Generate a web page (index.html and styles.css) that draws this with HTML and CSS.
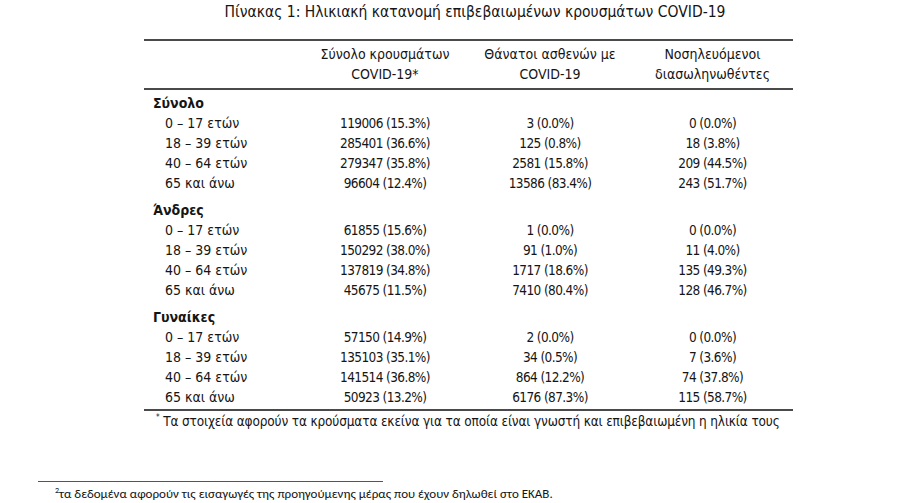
FILE: index.html
```html
<!DOCTYPE html>
<html lang="el">
<head>
<meta charset="utf-8">
<link rel="stylesheet" href="styles.css">
</head>
<body>
<div class="title">Πίνακας 1: Ηλικιακή κατανομή επιβεβαιωμένων κρουσμάτων COVID-19</div>
<div class="table">
  <div class="head">
    <div></div>
    <div class="c">Σύνολο κρουσμάτων<br>COVID-19*</div>
    <div class="c">Θάνατοι ασθενών με<br>COVID-19</div>
    <div class="c">Νοσηλευόμενοι<br>διασωληνωθέντες</div>
  </div>
  <div class="body">
    <div class="group">
      <div class="gh">Σύνολο</div>
      <div class="row"><div class="l">0 – 17 ετών</div><div class="c">119006 (15.3%)</div><div class="c">3 (0.0%)</div><div class="c">0 (0.0%)</div></div>
      <div class="row"><div class="l">18 – 39 ετών</div><div class="c">285401 (36.6%)</div><div class="c">125 (0.8%)</div><div class="c">18 (3.8%)</div></div>
      <div class="row"><div class="l">40 – 64 ετών</div><div class="c">279347 (35.8%)</div><div class="c">2581 (15.8%)</div><div class="c">209 (44.5%)</div></div>
      <div class="row"><div class="l">65 και άνω</div><div class="c">96604 (12.4%)</div><div class="c">13586 (83.4%)</div><div class="c">243 (51.7%)</div></div>
    </div>
    <div class="group">
      <div class="gh">Άνδρες</div>
      <div class="row"><div class="l">0 – 17 ετών</div><div class="c">61855 (15.6%)</div><div class="c">1 (0.0%)</div><div class="c">0 (0.0%)</div></div>
      <div class="row"><div class="l">18 – 39 ετών</div><div class="c">150292 (38.0%)</div><div class="c">91 (1.0%)</div><div class="c">11 (4.0%)</div></div>
      <div class="row"><div class="l">40 – 64 ετών</div><div class="c">137819 (34.8%)</div><div class="c">1717 (18.6%)</div><div class="c">135 (49.3%)</div></div>
      <div class="row"><div class="l">65 και άνω</div><div class="c">45675 (11.5%)</div><div class="c">7410 (80.4%)</div><div class="c">128 (46.7%)</div></div>
    </div>
    <div class="group">
      <div class="gh">Γυναίκες</div>
      <div class="row"><div class="l">0 – 17 ετών</div><div class="c">57150 (14.9%)</div><div class="c">2 (0.0%)</div><div class="c">0 (0.0%)</div></div>
      <div class="row"><div class="l">18 – 39 ετών</div><div class="c">135103 (35.1%)</div><div class="c">34 (0.5%)</div><div class="c">7 (3.6%)</div></div>
      <div class="row"><div class="l">40 – 64 ετών</div><div class="c">141514 (36.8%)</div><div class="c">864 (12.2%)</div><div class="c">74 (37.8%)</div></div>
      <div class="row"><div class="l">65 και άνω</div><div class="c">50923 (13.2%)</div><div class="c">6176 (87.3%)</div><div class="c">115 (58.7%)</div></div>
    </div>
  </div>
  <div class="note"><sup>*</sup> Τα στοιχεία αφορούν τα κρούσματα εκείνα για τα οποία είναι γνωστή και επιβεβαιωμένη η ηλικία τους</div>
</div>
<div class="foot">
  <div class="rule"></div>
  <div class="fn"><sup>2</sup>τα δεδομένα αφορούν τις εισαγωγές της προηγούμενης μέρας που έχουν δηλωθεί στο ΕΚΑΒ.</div>
</div>
</body>
</html>
```
FILE: styles.css
```css
html, body {
  margin: 0;
  padding: 0;
  background: #ffffff;
}
body {
  width: 924px;
  height: 503px;
  overflow: hidden;
  color: #151515;
  font-family: "DejaVu Sans Condensed", "Liberation Sans", sans-serif;
  font-size: 14px;
}
.title {
  font-size: 15.5px;
  line-height: 20px;
  margin-top: 2px;
  text-align: center;
  padding-left: 26px;
}
.table {
  margin-left: 144px;
  width: 649px;
  margin-top: 17px;
  border-top: 2px solid #4a4a4a;
}
.head, .row {
  display: grid;
  grid-template-columns: 158px 166px 164px 161px;
}
.head {
  line-height: 20px;
  padding: 3px 0 4px;
  border-bottom: 2px solid #4a4a4a;
}
.c {
  text-align: center;
}
.row .c {
  font-size: 13.5px;
  letter-spacing: -0.6px;
}
.body {
  padding: 3px 0 2px;
  border-bottom: 2px solid #4a4a4a;
  line-height: 20px;
}
.group + .group {
  margin-top: 7px;
}
.gh {
  font-weight: bold;
  padding-left: 9px;
}
.l {
  padding-left: 21px;
}
.note {
  padding-left: 12px;
  line-height: 20px;
  font-size: 13.5px;
  letter-spacing: -0.15px;
  white-space: nowrap;
}
.note sup {
  font-size: 8px;
  vertical-align: 6px;
  line-height: 0;
}
.foot {
  margin-top: 50px;
}
.rule {
  margin-left: 38px;
  width: 345px;
  border-top: 1px solid #555;
}
.fn {
  margin-left: 55px;
  margin-top: 4px;
  font-family: "Carlito", "Liberation Sans", sans-serif;
  font-size: 13px;
  line-height: 16px;
}
.fn sup {
  font-size: 8px;
  vertical-align: 5px;
  line-height: 0;
}
```
